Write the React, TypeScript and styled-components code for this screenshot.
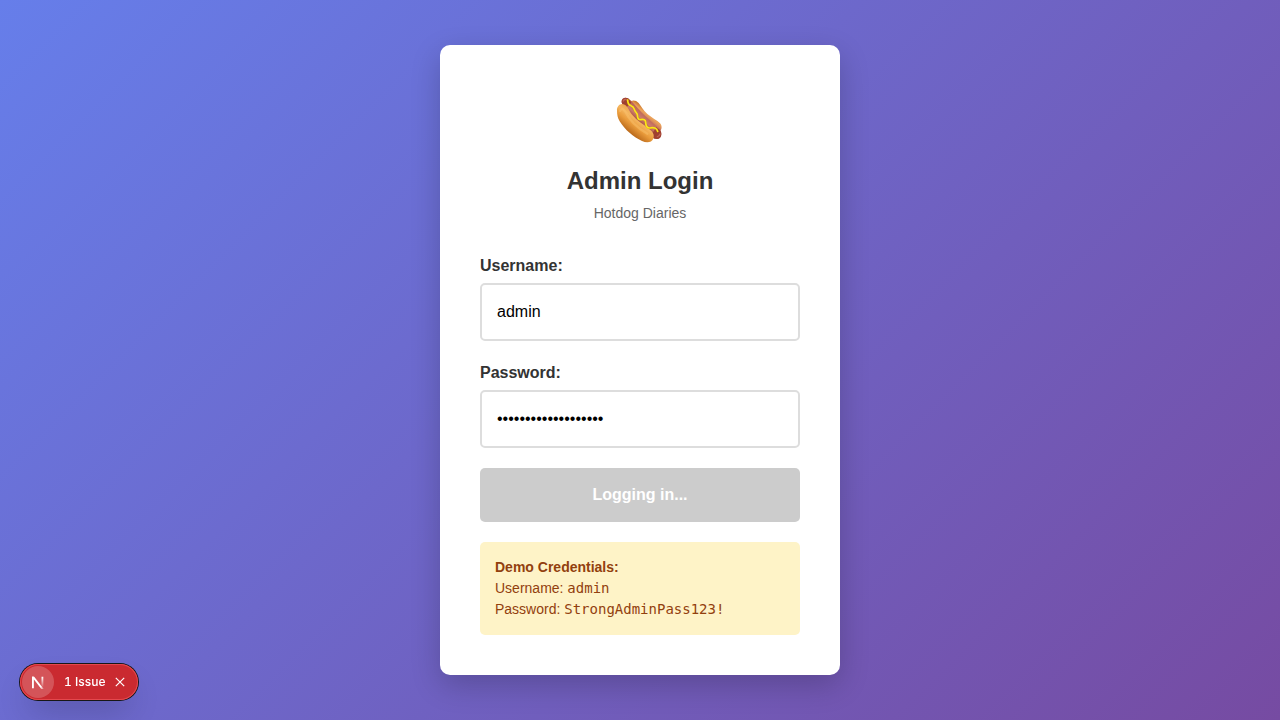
import React, { useState } from "react";
import styled, { createGlobalStyle } from "styled-components";

const GlobalStyle = createGlobalStyle`
  *, *::before, *::after { box-sizing: border-box; }
  body {
    margin: 0;
    font-family: "Liberation Sans", Arial, Helvetica, sans-serif;
    font-size: 16px;
    line-height: 24px;
    color: #333;
  }
`;

const Page = styled.main`
  min-height: 100vh;
  display: flex;
  align-items: center;
  justify-content: center;
  padding: 20px;
  background: linear-gradient(135deg, #667eea 0%, #764ba2 100%);
`;

const Card = styled.section`
  width: 100%;
  max-width: 400px;
  padding: 40px;
  border-radius: 10px;
  background: #fff;
  box-shadow: 0 10px 30px rgba(0, 0, 0, 0.2);
`;

const Header = styled.header`
  display: flex;
  flex-direction: column;
  align-items: center;
  margin-bottom: 30px;
  text-align: center;
`;

const Emblem = styled.div`
  display: flex;
  align-items: center;
  height: 72px;
  margin-bottom: 10px;
`;

const Title = styled.h1`
  margin: 0 0 8px;
  font-size: 24px;
  line-height: 28px;
  font-weight: 700;
`;

const Subtitle = styled.p`
  margin: 0;
  font-size: 14px;
  line-height: 21px;
  color: #666;
`;

const Form = styled.form`
  display: flex;
  flex-direction: column;
  gap: 20px;
`;

const Field = styled.div`
  display: flex;
  flex-direction: column;
  gap: 5px;
`;

const Label = styled.label`
  font-weight: 700;
`;

const Input = styled.input`
  width: 100%;
  padding: 15px;
  border: 2px solid #ddd;
  border-radius: 5px;
  background: #fff;
  font: inherit;
  height: 58px;
  color: #000;
  outline: none;
`;

const SubmitButton = styled.button`
  padding: 15px;
  border: 0;
  border-radius: 5px;
  background: #ccc;
  color: #fff;
  font: inherit;
  font-weight: 700;
  cursor: not-allowed;
`;

const Demo = styled.div`
  margin-top: 20px;
  padding: 15px;
  border-radius: 5px;
  background: #fef3c7;
  color: #92400e;
  font-size: 14px;
  line-height: 21px;

  p { margin: 0; }
  code {
    font-family: "DejaVu Sans Mono", monospace;
    font-size: 14px;
    line-height: 1;
  }
`;

const IssueBadge = styled.div`
  position: fixed;
  left: 20px;
  bottom: 20px;
  display: flex;
  align-items: center;
  height: 36px;
  padding: 2px;
  border-radius: 18px;
  background: #ca2a30;
  box-shadow:
    0 0 0 1px #171717,
    inset 0 0 0 1px #e5484d,
    0 16px 32px -8px rgba(0, 0, 0, 0.24);
`;

const BadgeButton = styled.button`
  display: flex;
  align-items: center;
  justify-content: center;
  padding: 0;
  border: 0;
  background: transparent;
  color: #fff;
  cursor: pointer;
`;

const Mark = styled(BadgeButton)`
  width: 32px;
  height: 32px;
  border-radius: 50%;
  background: rgba(255, 255, 255, 0.2);
`;

const IssueCount = styled(BadgeButton)`
  margin-left: 10px;
  font-family: Inter, "Liberation Sans", sans-serif;
  font-size: 12px;
  line-height: 16px;
  font-weight: 500;
  font-variant-numeric: tabular-nums;
`;

const Dismiss = styled(BadgeButton)`
  width: 24px;
  height: 24px;
  margin: 0 4px 0 3px;
`;

function HotdogIcon() {
  return (
    <svg width="50" height="48" viewBox="45 36 150 144" role="img" aria-label="Hotdog">
      <defs>
        <linearGradient id="frontBun" gradientUnits="userSpaceOnUse" x1="124" y1="92" x2="86" y2="140">
          <stop offset="0" stopColor="#e8a24c" />
          <stop offset="0.3" stopColor="#f5b660" />
          <stop offset="0.6" stopColor="#ea9c3c" />
          <stop offset="1" stopColor="#bd6c1c" />
        </linearGradient>
        <linearGradient id="backBun" gradientUnits="userSpaceOnUse" x1="148" y1="82" x2="134" y2="100">
          <stop offset="0" stopColor="#cf7d30" />
          <stop offset="0.4" stopColor="#eda45a" />
          <stop offset="1" stopColor="#c4745a" />
        </linearGradient>
        <linearGradient id="sausage" gradientUnits="userSpaceOnUse" x1="140" y1="92" x2="116" y2="120">
          <stop offset="0" stopColor="#bd6656" />
          <stop offset="0.45" stopColor="#cd7c6b" />
          <stop offset="1" stopColor="#96382a" />
        </linearGradient>
      </defs>
      <path d="M90 54C92 44 107 44 116 54C123 63 130 76 142 87C155 98 171 106 180 115C187 123 186 133 180 138C150 128 104 88 90 54Z" fill="url(#backBun)" />
      <path d="M66 55C61 43 73 34 84 40C99 50 108 66 124 82C141 99 160 115 178 132C188 142 184 162 172 162C153 163 119 132 100 109C85 91 73 71 66 55Z" fill="url(#sausage)" />
      <path d="M66 55C61 43 73 34 84 40C88 44 91 48 94 53L78 68C72 64 68 60 66 55ZM155 148L169 127L180 135C188 145 184 162 172 162C166 162 160 159 154 156Z" fill="#9f4031" />
      <path d="M70 48C72 43 77 42 81 45M172 155C176 154 179 151 180 147" fill="none" stroke="#c06453" strokeWidth="4" strokeLinecap="round" />
      <path d="M51 78C50 62 62 53 74 59C85 65 87 78 98 91C112 108 130 119 147 131C159 140 164 149 160 161C155 173 140 174 126 168C101 157 74 134 59 109C53 99 51 88 51 78Z" fill="url(#frontBun)" />
      <path d="M60 78C63 70 70 71 75 79C88 106 113 130 142 146" fill="none" stroke="#fac46f" strokeWidth="7" strokeLinecap="round" opacity="0.45" />
      <path d="M83 45C83 54 86 60 93 62C102 65 102 70 104 76C106 82 112 84 112 89C112 97 113 104 122 104C131 102 137 104 137 112C137 122 141 130 150 129C160 126 171 129 173 139" fill="none" stroke="#b77a14" strokeWidth="7" strokeLinecap="round" opacity="0.4" />
      <path d="M83 45C83 54 86 60 93 62C102 65 102 70 104 76C106 82 112 84 112 89C112 97 113 104 122 104C131 102 137 104 137 112C137 122 141 130 150 129C160 126 171 129 173 139" fill="none" stroke="#fbe716" strokeWidth="5" strokeLinecap="round" strokeLinejoin="round" />
    </svg>
  );
}

function NextMark() {
  return (
    <svg width="32" height="32" viewBox="0 0 32 32" fill="none" aria-hidden="true">
      <defs>
        <linearGradient id="markDiagonal" gradientUnits="userSpaceOnUse" x1="9.96" y1="11.12" x2="15.48" y2="17.97">
          <stop stopColor="#fff" />
          <stop offset="0.6" stopColor="#fff" stopOpacity="0" />
        </linearGradient>
        <linearGradient id="markStem" gradientUnits="userSpaceOnUse" x1="11.8" y1="1.4" x2="11.8" y2="12">
          <stop stopColor="#fff" />
          <stop offset="1" stopColor="#fff" stopOpacity="0" />
        </linearGradient>
        <clipPath id="markBounds">
          <rect x="1" y="1" width="12.6" height="12.4" />
        </clipPath>
      </defs>
      <g transform="translate(8.6 9.6)" clipPath="url(#markBounds)">
        <path d="M13.3 15.2L2.34 1V12.6" stroke="url(#markDiagonal)" strokeWidth="1.86" />
        <path d="M10.9 1V12H12.7V1Z" fill="url(#markStem)" />
      </g>
    </svg>
  );
}

export default function App() {
  const [username, setUsername] = useState("admin");
  const [password, setPassword] = useState("StrongAdminPass123!");

  return (
    <>
      <GlobalStyle />
      <Page>
        <Card>
          <Header>
            <Emblem>
              <HotdogIcon />
            </Emblem>
            <Title>Admin Login</Title>
            <Subtitle>Hotdog Diaries</Subtitle>
          </Header>
          <Form onSubmit={(e) => e.preventDefault()}>
            <Field>
              <Label htmlFor="username">Username:</Label>
              <Input id="username" type="text" value={username} onChange={(e) => setUsername(e.target.value)} />
            </Field>
            <Field>
              <Label htmlFor="password">Password:</Label>
              <Input id="password" type="password" value={password} onChange={(e) => setPassword(e.target.value)} />
            </Field>
            <SubmitButton type="submit" disabled>Logging in...</SubmitButton>
          </Form>
          <Demo>
            <p><strong>Demo Credentials:</strong></p>
            <p>Username: <code>admin</code></p>
            <p>Password: <code>StrongAdminPass123!</code></p>
          </Demo>
        </Card>
      </Page>
      <IssueBadge>
        <Mark type="button" aria-label="Open Next.js Dev Tools">
          <NextMark />
        </Mark>
        <IssueCount type="button">1 Issue</IssueCount>
        <Dismiss type="button" aria-label="Collapse issues badge">
          <svg width="10" height="10" viewBox="0 0 10 10" fill="none" stroke="currentColor" strokeWidth="1.2" aria-hidden="true">
            <path d="M0.8 0.8L9.2 9.2M9.2 0.8L0.8 9.2" />
          </svg>
        </Dismiss>
      </IssueBadge>
    </>
  );
}
